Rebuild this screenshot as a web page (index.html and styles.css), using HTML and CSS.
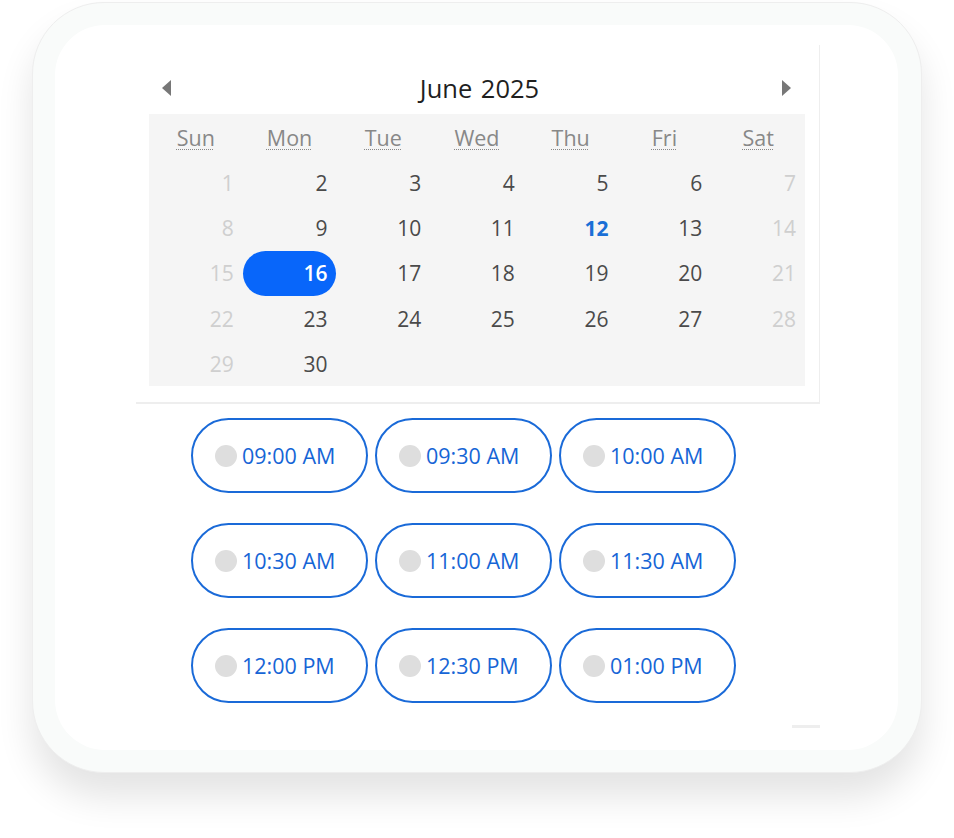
FILE: index.html
```html
<!DOCTYPE html>
<html>
<head>
<meta charset="utf-8">
<link rel="stylesheet" href="styles.css">
</head>
<body>
<div class="card">
  <div class="inner">
    <div class="calendar">
      <div class="cal-header">
        <span class="arrow arrow-left"></span>
        <span class="title">June 2025</span>
        <span class="arrow arrow-right"></span>
      </div>
      <div class="grid">
        <div class="wd"><abbr>Sun</abbr></div>
        <div class="wd"><abbr>Mon</abbr></div>
        <div class="wd"><abbr>Tue</abbr></div>
        <div class="wd"><abbr>Wed</abbr></div>
        <div class="wd"><abbr>Thu</abbr></div>
        <div class="wd"><abbr>Fri</abbr></div>
        <div class="wd"><abbr>Sat</abbr></div>

        <div class="day off">1</div><div class="day">2</div><div class="day">3</div><div class="day">4</div><div class="day">5</div><div class="day">6</div><div class="day off">7</div>
        <div class="day off">8</div><div class="day">9</div><div class="day">10</div><div class="day">11</div><div class="day today">12</div><div class="day">13</div><div class="day off">14</div>
        <div class="day off">15</div><div class="day selected">16</div><div class="day">17</div><div class="day">18</div><div class="day">19</div><div class="day">20</div><div class="day off">21</div>
        <div class="day off">22</div><div class="day">23</div><div class="day">24</div><div class="day">25</div><div class="day">26</div><div class="day">27</div><div class="day off">28</div>
        <div class="day off">29</div><div class="day">30</div><div class="day"></div><div class="day"></div><div class="day"></div><div class="day"></div><div class="day"></div>
      </div>
    </div>
    <div class="slots">
      <div class="slot"><span class="dot"></span>09:00 AM</div>
      <div class="slot"><span class="dot"></span>09:30 AM</div>
      <div class="slot"><span class="dot"></span>10:00 AM</div>
      <div class="slot"><span class="dot"></span>10:30 AM</div>
      <div class="slot"><span class="dot"></span>11:00 AM</div>
      <div class="slot"><span class="dot"></span>11:30 AM</div>
      <div class="slot"><span class="dot"></span>12:00 PM</div>
      <div class="slot"><span class="dot"></span>12:30 PM</div>
      <div class="slot"><span class="dot"></span>01:00 PM</div>
    </div>
    <div class="foot"><span class="mark"></span></div>
  </div>
</div>
</body>
</html>
```

FILE: styles.css
```css
html, body {
  margin: 0;
  padding: 0;
  background: #ffffff;
}
body {
  font-family: "Open Sans", "Noto Sans", "DejaVu Sans", sans-serif;
  width: 954px;
  height: 838px;
  overflow: hidden;
}
.card {
  box-sizing: border-box;
  margin: 2px 0 0 32px;
  width: 890px;
  height: 771px;
  border-radius: 72px;
  background: #f9fbfa;
  border: 1px solid #eeeeee;
  padding: 22px 23px 22px 22px;
  box-shadow: 0 24px 36px rgba(0, 0, 0, 0.11);
}
.inner {
  box-sizing: border-box;
  width: 843px;
  height: 725px;
  border-radius: 50px;
  background: #ffffff;
  padding: 20px 0 0 81px;
  display: flex;
  flex-direction: column;
}
.calendar {
  box-sizing: border-box;
  width: 684px;
  border-right: 1px solid #eeeeee;
  border-bottom: 2px solid #eeeeee;
  padding: 0 14px 16px 13px;
}
.cal-header {
  box-sizing: border-box;
  height: 69px;
  display: flex;
  align-items: center;
  justify-content: space-between;
  padding: 16px 14px 0 13px;
}
.arrow {
  width: 0;
  height: 0;
  border-top: 8px solid transparent;
  border-bottom: 8px solid transparent;
}
.arrow-left {
  border-right: 9px solid #777777;
}
.arrow-right {
  border-left: 9px solid #777777;
}
.title {
  font-size: 25.5px;
  color: #1f1f1f;
  word-spacing: 2px;
  margin-left: 6px;
}
.grid {
  width: 656px;
  background: #f5f5f5;
  display: grid;
  grid-template-columns: repeat(7, 1fr);
  grid-template-rows: 46px repeat(5, 45.3px);
}
.wd {
  display: flex;
  align-items: center;
  justify-content: center;
  font-size: 21.5px;
  color: #888888;
}
.wd abbr {
  text-decoration: underline dotted;
  text-decoration-thickness: 1px;
  text-underline-offset: 3px;
}
.day {
  display: flex;
  align-items: center;
  justify-content: flex-end;
  padding-right: 9px;
  font-size: 21px;
  color: #4a4a4a;
}
.day.off {
  color: #cfcfcf;
}
.day.today {
  color: #1a6fd6;
  font-weight: 700;
}
.day.selected {
  background: #0866fa;
  color: #ffffff;
  font-weight: 600;
  border-radius: 23px;
}
.slots {
  margin: 14px 0 0 55px;
  display: grid;
  grid-template-columns: repeat(3, 177px);
  grid-auto-rows: 75px;
  column-gap: 7px;
  row-gap: 30px;
}
.slot {
  box-sizing: border-box;
  border: 2px solid #1a6ad8;
  border-radius: 38px;
  display: flex;
  align-items: center;
  padding-left: 22px;
  font-size: 21.5px;
  color: #1665d6;
}
.dot {
  width: 22px;
  height: 22px;
  border-radius: 50%;
  background: #dedede;
  margin-right: 5px;
}
.foot {
  display: flex;
  justify-content: flex-end;
  padding: 22px 78px 0 0;
}
.mark {
  width: 28px;
  height: 3px;
  background: #eeeeee;
}
```
